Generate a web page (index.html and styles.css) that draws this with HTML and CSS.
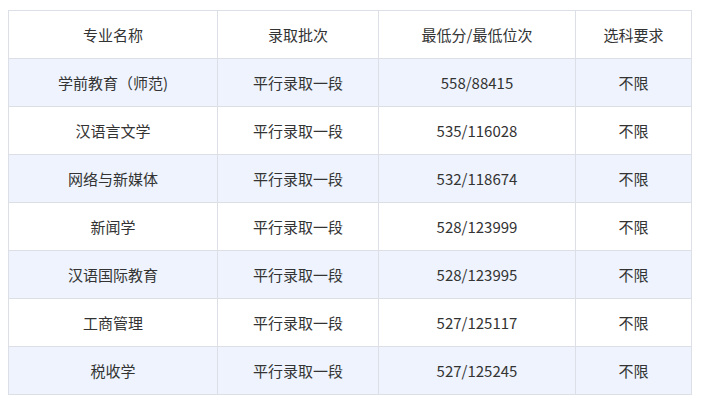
FILE: index.html
```html
<!DOCTYPE html>
<html lang="zh">
<head>
<meta charset="utf-8">
<link rel="stylesheet" href="styles.css">
</head>
<body>
<table class="scores">
<colgroup>
<col class="c1"><col class="c2"><col class="c3"><col class="c4">
</colgroup>
<thead>
<tr><th>专业名称</th><th>录取批次</th><th>最低分/最低位次</th><th>选科要求</th></tr>
</thead>
<tbody>
<tr class="alt"><td>学前教育（师范)</td><td>平行录取一段</td><td>558/88415</td><td>不限</td></tr>
<tr><td>汉语言文学</td><td>平行录取一段</td><td>535/116028</td><td>不限</td></tr>
<tr class="alt"><td>网络与新媒体</td><td>平行录取一段</td><td>532/118674</td><td>不限</td></tr>
<tr><td>新闻学</td><td>平行录取一段</td><td>528/123999</td><td>不限</td></tr>
<tr class="alt"><td>汉语国际教育</td><td>平行录取一段</td><td>528/123995</td><td>不限</td></tr>
<tr><td>工商管理</td><td>平行录取一段</td><td>527/125117</td><td>不限</td></tr>
<tr class="alt"><td>税收学</td><td>平行录取一段</td><td>527/125245</td><td>不限</td></tr>
</tbody>
</table>
</body>
</html>
```
FILE: styles.css
```css
html, body { margin: 0; padding: 0; background: #fff; }
body { padding: 10px 0 0 8px; font-family: "Noto Sans CJK SC", "Noto Sans", sans-serif; font-size: 15px; color: #333; }
.scores { border-collapse: collapse; table-layout: fixed; width: 683px; }
.c1 { width: 209px; }
.c2 { width: 161px; }
.c3 { width: 197px; }
.c4 { width: 116px; }
.scores th, .scores td { border: 1px solid #dcdfe6; height: 47px; padding: 0; text-align: center; vertical-align: middle; font-weight: normal; line-height: 20px; }
.scores tr.alt td { background: #eef3fd; }
```
